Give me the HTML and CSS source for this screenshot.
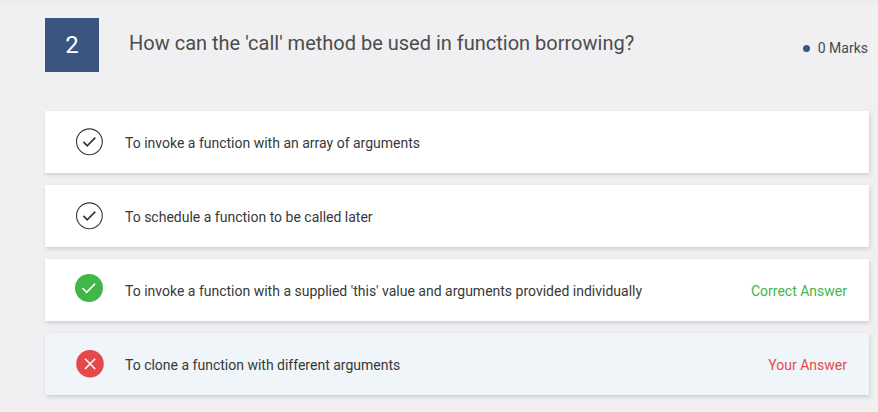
FILE: index.html
```html
<!DOCTYPE html>
<html lang="en">
<head>
<meta charset="utf-8">
<title>Quiz review</title>
<link rel="stylesheet" href="styles.css">
</head>
<body>
<main class="question">
  <header class="head">
    <div class="number">2</div>
    <h1 class="title">How can the 'call' method be used in function borrowing?</h1>
    <div class="marks"><span class="dot"></span>0 Marks</div>
  </header>
  <ul class="answers">
    <li class="answer">
      <svg class="icon" viewBox="0 0 30 30"><circle cx="15.4" cy="14.8" r="12.9" fill="none" stroke="#38383a" stroke-width="1.1"/><path d="M9.4 14.9l3.8 4 8.1-8.2" fill="none" stroke="#38383a" stroke-width="1.7"/></svg>
      <span class="text">To invoke a function with an array of arguments</span>
    </li>
    <li class="answer">
      <svg class="icon" viewBox="0 0 30 30"><circle cx="15.4" cy="14.8" r="12.9" fill="none" stroke="#38383a" stroke-width="1.1"/><path d="M9.4 14.9l3.8 4 8.1-8.2" fill="none" stroke="#38383a" stroke-width="1.7"/></svg>
      <span class="text">To schedule a function to be called later</span>
    </li>
    <li class="answer">
      <svg class="icon icon-correct" viewBox="0 0 30 30"><circle cx="15" cy="15" r="14" fill="#43b649"/><path d="M8.4 15l4.3 4.3 8.4-8.7" fill="none" stroke="#fff" stroke-width="1.7"/></svg>
      <span class="text">To invoke a function with a supplied 'this' value and arguments provided individually</span>
      <span class="tag correct">Correct Answer</span>
    </li>
    <li class="answer chosen">
      <svg class="icon icon-wrong" viewBox="0 0 30 30"><circle cx="15" cy="14.8" r="13.8" fill="#e54a4b"/><path d="M10 9.8l10.2 10.2M20.2 9.8L10 20" fill="none" stroke="#fff" stroke-width="1.5"/></svg>
      <span class="text">To clone a function with different arguments</span>
      <span class="tag wrong">Your Answer</span>
    </li>
  </ul>
</main>
</body>
</html>
```
FILE: styles.css
```css
* { box-sizing: border-box; }
body { margin: 0; height: 412px; background: #f0f0f2 linear-gradient(#ebebed, #f0f0f2 5px) no-repeat; color: #38383a; font: 14px/20px Roboto, sans-serif; overflow: hidden; }
.question { padding: 18px 9px 0 45px; }
.head { display: flex; height: 54px; }
.number { width: 54px; height: 54px; background: #3a5680; color: #fff; font-size: 24px; line-height: 54px; text-align: center; }
.title { flex: 1; margin: 0 0 0 30px; font-size: 20px; font-weight: 400; line-height: 50px; color: #4c4c4e; white-space: nowrap; }
.marks { display: flex; align-items: center; height: 60px; margin-right: 1px; color: #48484a; }
.dot { width: 7px; height: 7px; margin-right: 8px; border-radius: 50%; background: #3a5683; }
.answers { display: grid; gap: 12px; margin: 39px 0 0; padding: 0; list-style: none; }
.answer { display: flex; align-items: center; height: 62px; padding: 2px 22px 0 29px; background: #fff; box-shadow: 1px 2px 4px rgba(0, 0, 0, .14); }
.chosen { background: #eff5f8; }
.icon { width: 30px; height: 30px; margin: 0 21px 2px 0; }
.icon-correct { margin: 0 21px 6px 0; }
.icon-wrong { margin: 0 20px 2px 1px; }
.text { flex: 1; }
.correct { color: #43b649; }
.wrong { color: #e54a4b; }
```
